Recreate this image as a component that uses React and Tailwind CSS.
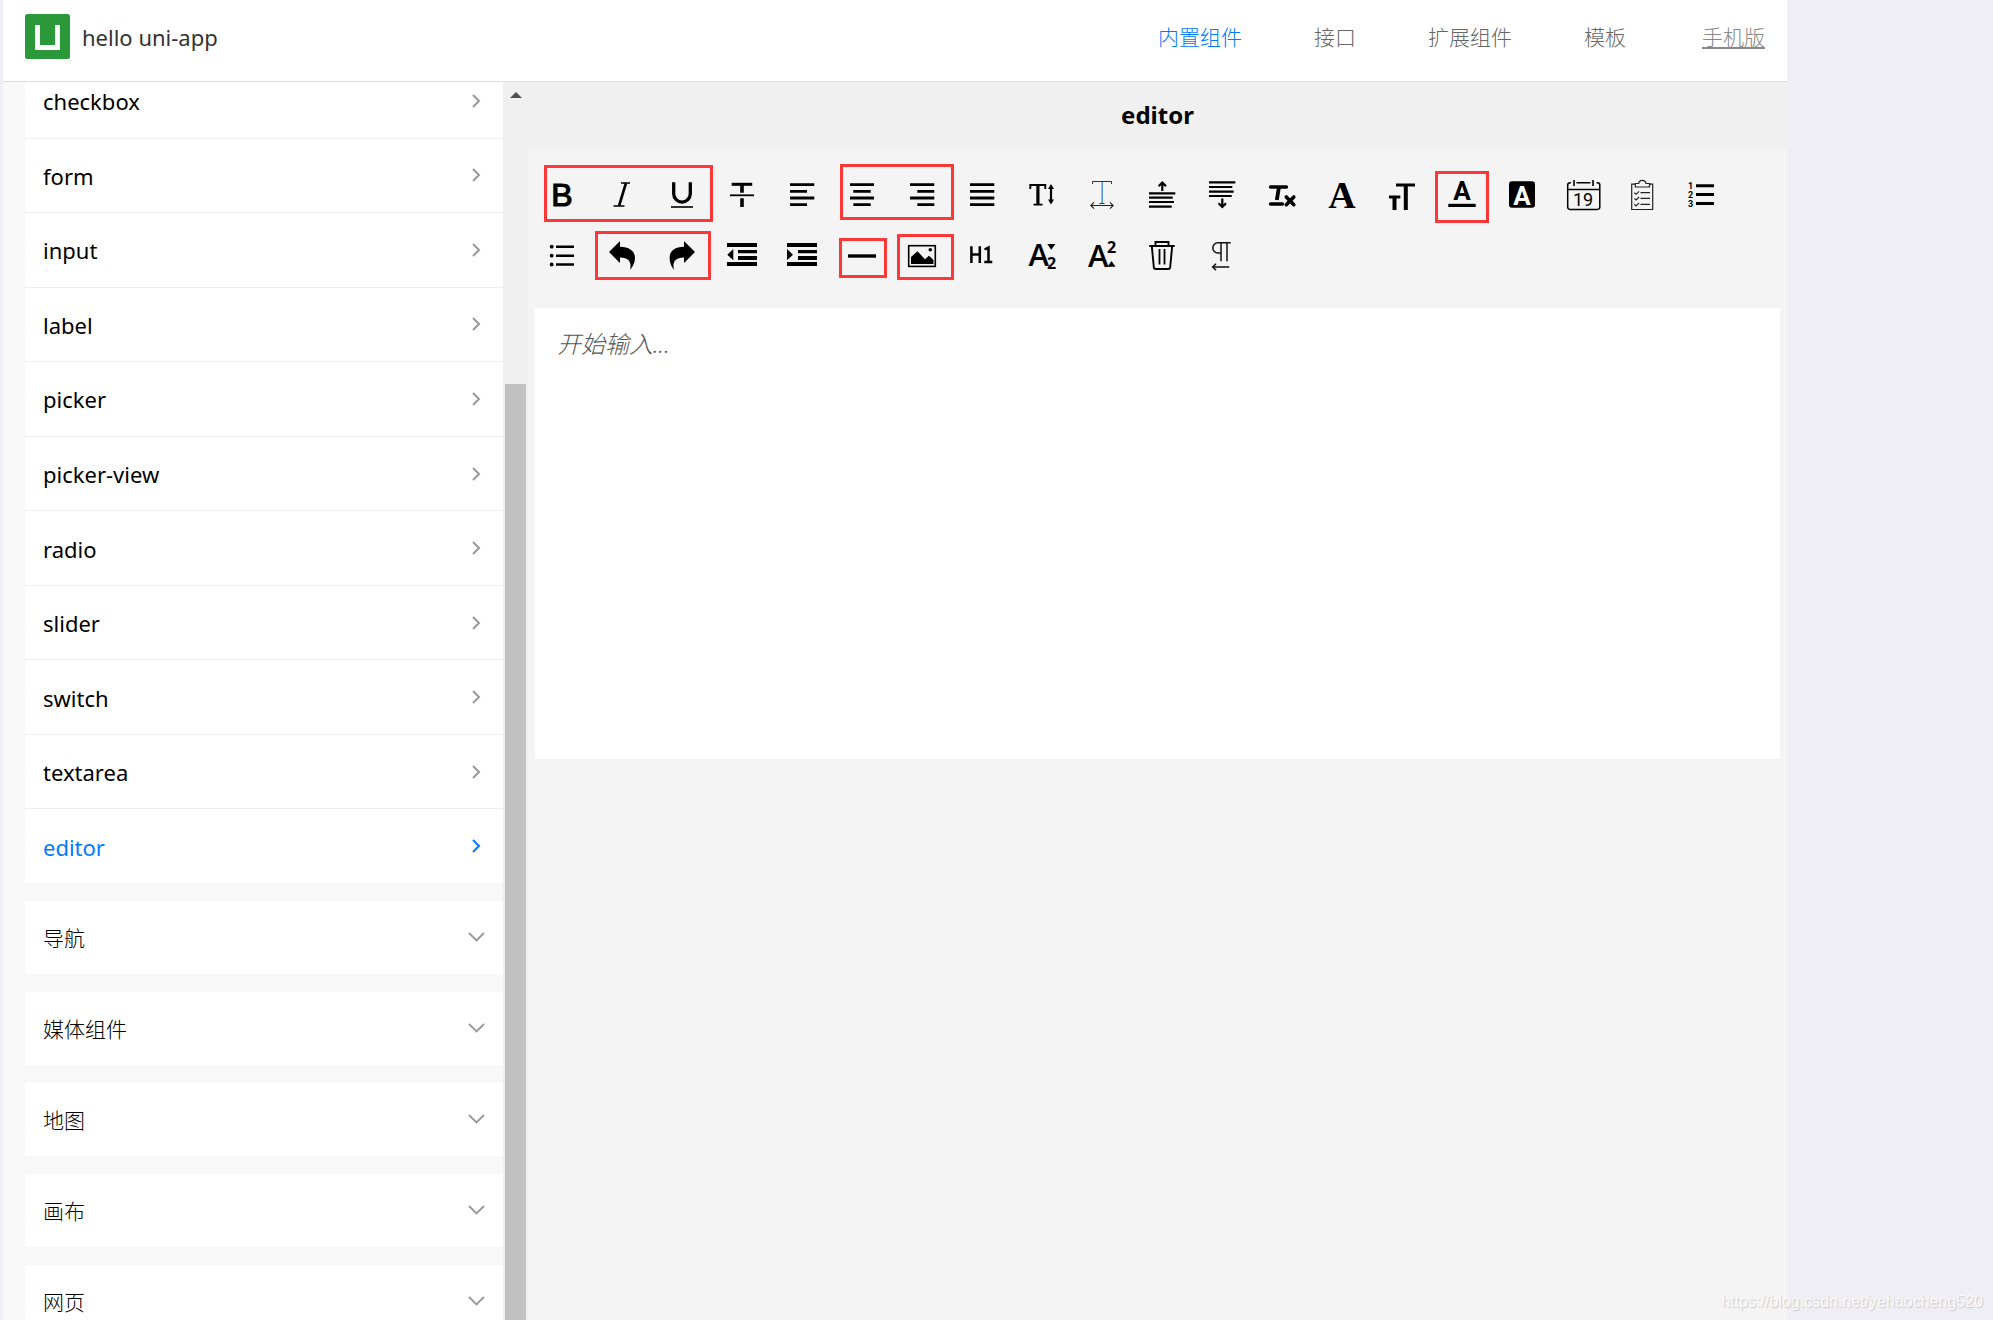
import React from 'react';

const components = [
  'checkbox',
  'form',
  'input',
  'label',
  'picker',
  'picker-view',
  'radio',
  'slider',
  'switch',
  'textarea',
  'editor',
];

const groups = ['导航', '媒体组件', '地图', '画布', '网页'];

const tabs = ['内置组件', '接口', '扩展组件', '模板'];

// every toolbar icon is drawn on a 40x40 grid
const tools = [
  {
    name: 'bold',
    icon: (
      <text x="20" y="30" textAnchor="middle" fontSize="32" fill="#000" strokeWidth="1.2" fontFamily="'Liberation Sans', sans-serif">B</text>
    ),
  },
  {
    name: 'italic',
    icon: (
      <>
        <path d="M19 7h9M11.5 30h11" strokeWidth="1.6" />
        <path d="M24 7l-7 23" strokeWidth="2.6" />
      </>
    ),
  },
  {
    name: 'underline',
    icon: (
      <>
        <path d="M11.7 6.3v11.5a8.3 8.3 0 0 0 16.6 0V6.3" strokeWidth="3.3" />
        <path d="M9 31h22" strokeWidth="1.6" />
      </>
    ),
  },
  {
    name: 'strike',
    icon: (
      <>
        <path d="M9.7 8.3h20.5" strokeWidth="3" />
        <path d="M20 8.3v8.4M20 22.3V31" strokeWidth="3.6" />
        <path d="M8 19.3h24" strokeWidth="1.8" />
      </>
    ),
  },
  { name: 'align-left', icon: <path d="M8 8.7h24.3M8 15.3h17M8 22h24.3M8 28.7h17" strokeWidth="2.8" /> },
  { name: 'align-center', icon: <path d="M8 8.7h24M11.3 15.3h17.4M8 22h24M11.3 28.7h17.4" strokeWidth="2.8" /> },
  { name: 'align-right', icon: <path d="M8 8.7h24.3M15.3 15.3h17M8 22h24.3M15.3 28.7h17" strokeWidth="2.8" /> },
  { name: 'align-justify', icon: <path d="M8 8.7h24.3M8 15.3h24.3M8 22h24.3M8 28.7h24.3" strokeWidth="2.8" /> },
  {
    name: 'line-height',
    icon: (
      <>
        <path d="M8.3 13V9h15v4M11.5 28.6h9" strokeWidth="1.9" />
        <path d="M15.9 9v19.5" strokeWidth="3.2" />
        <path d="M29 11v15" strokeWidth="2.2" />
        <path d="M29 8l3 5h-6zM29 28.5l3-5h-6z" fill="#000" stroke="none" />
      </>
    ),
  },
  {
    name: 'letter-spacing',
    icon: (
      <>
        <path d="M10.5 8V5.5h19V8M17.5 27.5h5" strokeWidth="1" stroke="#333" />
        <path d="M19.5 6v21" strokeWidth="1" stroke="#d9ab78" />
        <path d="M20.5 6v21" strokeWidth="1" stroke="#579bd0" />
        <path d="M9 29.5h22M12 26.3l-3.2 3.2 3.2 3.2M28 26.3l3.2 3.2-3.2 3.2" strokeWidth="1.1" stroke="#222" />
      </>
    ),
  },
  {
    name: 'margin-top',
    icon: (
      <>
        <path d="M7 17.3h26.3M7 21.7h23.7M7 26h25M7 30.7h22.7" strokeWidth="2.2" />
        <path d="M20.3 15V6.5M16.6 10.3l3.7-3.8 3.7 3.8" strokeWidth="2.2" />
      </>
    ),
  },
  {
    name: 'margin-bottom',
    icon: (
      <>
        <path d="M7 6.3h26.3M7 11h23.3M7 15.7h24.7M7 20h22.7" strokeWidth="2.2" />
        <path d="M20.3 22.5V31M16.6 27.2l3.7 3.8 3.7-3.8" strokeWidth="2.2" />
      </>
    ),
  },
  {
    name: 'clear-format',
    icon: (
      <>
        <path d="M8.5 11h16M8.5 28h12" strokeWidth="3.3" strokeLinecap="round" />
        <path d="M17 11l-2.2 13" strokeWidth="3.8" />
        <path d="M24.3 21l7.5 7.7M31.8 21l-7.5 7.7" strokeWidth="3.6" strokeLinecap="round" />
      </>
    ),
  },
  {
    name: 'font-family',
    icon: (
      <text x="20" y="31.5" textAnchor="middle" fontSize="38" fontWeight="700" fill="#000" stroke="none" fontFamily="'Liberation Serif', serif">A</text>
    ),
  },
  {
    name: 'font-size',
    icon: (
      <>
        <path d="M14 9h19M7 21h11.3" strokeWidth="3.2" />
        <path d="M23.8 9v25M12.5 21v13" strokeWidth="4" />
      </>
    ),
  },
  {
    name: 'color',
    icon: (
      <>
        <text x="20" y="24" textAnchor="middle" fontSize="26" fontWeight="700" fill="#000" stroke="none" fontFamily="Roboto, sans-serif">A</text>
        <path d="M6.3 29.4h27.4" strokeWidth="3.2" />
      </>
    ),
  },
  {
    name: 'background-color',
    icon: (
      <>
        <rect x="7" y="5.3" width="26" height="26.4" rx="3" fill="#000" stroke="none" />
        <text x="20" y="28.5" textAnchor="middle" fontSize="26" fontWeight="700" fill="#fff" stroke="none" fontFamily="Roboto, sans-serif">A</text>
      </>
    ),
  },
  {
    name: 'date',
    icon: (
      <>
        <path d="M9 6.8H8a2.3 2.3 0 0 0-2.3 2.3v22a2.3 2.3 0 0 0 2.3 2.3h27.5a2.3 2.3 0 0 0 2.3-2.3v-22a2.3 2.3 0 0 0-2.3-2.3h-1M14.5 6.8h14M5.7 13.4h32" strokeWidth="1.5" />
        <path d="M12 4v6M31 4v6" strokeWidth="1.6" />
        <text x="21" y="29.5" textAnchor="middle" fontSize="18" fill="#000" stroke="none" fontFamily="Roboto, sans-serif">19</text>
      </>
    ),
  },
  {
    name: 'check-list',
    icon: (
      <g stroke="#222" strokeWidth="1.2">
        <path d="M13 8.2H9.7v25.3h21V8.2h-3" />
        <path d="M13.3 11V7.5h3.4c.4-4.2 6.8-4.2 7.2 0h3.6V11z" />
        <path d="M18.5 16.7h9.5M18.5 22.4h9.5M18.5 28.3h9.5" />
        <path d="M12.3 16.7l1.8 1.6 3-3M12.3 22.4l1.8 1.6 3-3M12.3 28.3l1.8 1.6 3-3" />
      </g>
    ),
  },
  {
    name: 'ordered-list',
    icon: (
      <>
        <path d="M14 9.7h18M14 18.4h18M14 27.4h18" strokeWidth="3" />
        <g fontSize="9" fontWeight="700" fill="#000" stroke="none" fontFamily="Roboto, sans-serif">
          <text x="6" y="12.5">1</text>
          <text x="6" y="21.5">2</text>
          <text x="6" y="31">3</text>
        </g>
      </>
    ),
  },
  {
    name: 'bullet-list',
    icon: (
      <>
        <path d="M14 10.7h18M14 19.7h18M14 28.5h18" strokeWidth="2.6" />
        <g fill="#000" stroke="none">
          <circle cx="9.7" cy="10.7" r="1.9" />
          <circle cx="9.7" cy="19.7" r="1.9" />
          <circle cx="9.7" cy="28.5" r="1.9" />
        </g>
      </>
    ),
  },
  {
    name: 'undo',
    icon: <path d="M7 16L18 5v5.8c10 .2 15 4.7 15 11.2 0 5-2.5 9-5 12 1.5-6 .5-12.5-10-12.5V27z" fill="#000" stroke="none" />,
  },
  {
    name: 'redo',
    icon: <path d="M33 16L22 5v5.8C12 11 7.6 15.5 7.6 22c0 5 2 9 4.4 12-1.5-6-.5-12.5 10-12.5V27z" fill="#000" stroke="none" />,
  },
  {
    name: 'outdent',
    icon: <path d="M5 7h30v4H5zM16 14h19v3.3H16zM16 20h19v4H16zM5 26h30v4H5zM5.3 18.7l6-5.7v11.3z" fill="#000" stroke="none" />,
  },
  {
    name: 'indent',
    icon: <path d="M5 7h30v4H5zM16 14h19v3.3H16zM16 20h19v4H16zM5 26h30v4H5zM11 18.7L5 13v11.3z" fill="#000" stroke="none" />,
  },
  { name: 'divider', icon: <path d="M6 20h28" strokeWidth="3.4" /> },
  {
    name: 'image',
    icon: (
      <>
        <rect x="6.7" y="9.7" width="26.6" height="20.7" strokeWidth="1.6" />
        <path d="M9 28v-7l6.5-5.7 7.5 8 4-3.5 4.5 4.2v4z" fill="#000" stroke="none" />
        <circle cx="28.3" cy="13.8" r="1.8" fill="#000" stroke="none" />
      </>
    ),
  },
  {
    name: 'header',
    icon: <path d="M9.4 10.3V27M17.8 10.3V27M9.4 18.4h8.4M22.3 26h8M26.5 27V11.5l-4 2" strokeWidth="2.5" />,
  },
  {
    name: 'subscript',
    icon: (
      <>
        <g fill="#000" stroke="none" fontFamily="'Open Sans', sans-serif">
          <text x="6.5" y="30" fontSize="31" fontWeight="600">A</text>
          <text x="25" y="33" fontSize="16" fontWeight="700">2</text>
        </g>
        <path d="M25.3 8h8l-4 5.7z" fill="#000" stroke="none" />
      </>
    ),
  },
  {
    name: 'superscript',
    icon: (
      <>
        <g fill="#000" stroke="none" fontFamily="'Open Sans', sans-serif">
          <text x="6" y="30.5" fontSize="31" fontWeight="600">A</text>
          <text x="25" y="17" fontSize="16" fontWeight="700">2</text>
        </g>
        <path d="M25.5 30.7h8l-4-5.7z" fill="#000" stroke="none" />
      </>
    ),
  },
  {
    name: 'trash',
    icon: (
      <>
        <path d="M7.3 10h25.4M13.5 10V6h13v4" strokeWidth="1.9" />
        <path d="M9.8 10l2 21a2 2 0 0 0 2 2h12.4a2 2 0 0 0 2-2l2-21" strokeWidth="1.9" />
        <path d="M17.5 13v15.5M22.5 13v15.5" strokeWidth="1.8" />
      </>
    ),
  },
  {
    name: 'direction',
    icon: (
      <g stroke="#111" strokeWidth="1.5">
        <path d="M28.7 6.7H16a5.2 5.2 0 0 0 0 10.4h3M19 6.7v18.6M25 6.7v18.6" />
        <path d="M27.3 31H10.5M14 27.8L10.7 31l3.3 3.2" />
      </g>
    ),
  },
];

// red frames laid over the highlighted tools
const frames = [
  'left-[16px] top-[17px] w-[169px] h-[57px]',
  'left-[312px] top-[16px] w-[114px] h-[56px]',
  'left-[907px] top-[23px] w-[54px] h-[52px]',
  'left-[67px] top-[83px] w-[116px] h-[49px]',
  'left-[311px] top-[90px] w-[48px] h-[40px]',
  'left-[369px] top-[86px] w-[57px] h-[46px]',
];

function Header() {
  return (
    <header className="flex shrink-0 items-center justify-between h-[82px] px-[22px] pb-2 bg-white border-b border-[#dcdcdc]">
      <div className="flex items-center gap-3">
        <svg className="w-[45px] h-[45px]" viewBox="0 0 45 45">
          <rect width="45" height="45" rx="2.5" fill="#2b9939" />
          <path d="M12.5 11v22.5h20V11" fill="none" stroke="#fff" strokeWidth="4.8" />
        </svg>
        <span className="text-[22px] leading-8 text-[#333]">hello uni-app</span>
      </div>
      <nav className="flex items-center gap-[72px] text-[21px] leading-8 font-light text-[#666]">
        {tabs.map((tab, i) => (
          <a key={tab} href="#" className={i === 0 ? 'text-[#007aff]' : ''}>{tab}</a>
        ))}
        <a href="#" className="ml-1 text-[#888] underline underline-offset-2">手机版</a>
      </nav>
    </header>
  );
}

function Sidebar() {
  return (
    <aside className="flex shrink-0 w-[525px] pl-[22px] bg-[#f8f8f8] overflow-hidden">
      <div className="flex-1 -mt-[18px]">
        <ul className="flex flex-col h-[819px] bg-white">
          {components.map((name) => (
            <li key={name} className="flex flex-1 border-b border-[#efefef] last:border-b-0">
              <a
                href="#"
                className={
                  name === 'editor'
                    ? 'flex flex-1 items-center justify-between pl-[18px] pr-[22px] text-[22px] text-[#007aff]'
                    : 'flex flex-1 items-center justify-between pl-[18px] pr-[22px] text-[22px] text-black'
                }
              >
                <span className="pt-0.5">{name}</span>
                <svg className="w-[9px] h-[14px]" viewBox="0 0 9 14" fill="none" stroke={name === 'editor' ? '#007aff' : '#999'} strokeWidth="2">
                  <path d="M1 1l6 6-6 6" />
                </svg>
              </a>
            </li>
          ))}
        </ul>
        {groups.map((name) => (
          <button key={name} className="flex items-center justify-between w-full h-[73px] mt-[18px] px-[18px] pb-0.5 bg-white text-[21px] font-light text-black">
            <span className="pt-1">{name}</span>
            <svg className="w-[17px] h-[10px]" viewBox="0 0 17 10" fill="none" stroke="#999" strokeWidth="1.9">
              <path d="M1 1l7.5 7.5L16 1" />
            </svg>
          </button>
        ))}
      </div>
      <div className="flex flex-col items-center w-[25px] pt-[10px] bg-[#f0f0f0]">
        <svg className="shrink-0 w-3 h-[6px]" viewBox="0 0 12 6">
          <path d="M6 0l6 6H0z" fill="#505050" />
        </svg>
        <div className="flex-1 w-[21px] mt-[286px] bg-[#c1c1c1]" />
      </div>
    </aside>
  );
}

function Editor() {
  return (
    <main className="flex-1 bg-[#f4f4f4]">
      <h1 className="h-[66px] bg-[#f0f0f0] text-center text-[24px] leading-[66px] font-bold text-black">editor</h1>
      <div className="relative flex flex-wrap px-1 pt-[18px] pb-[22px]">
        {tools.map((tool) => (
          <button key={tool.name} aria-label={tool.name} className="flex items-center justify-center w-[60px] h-[60px]">
            <svg className="w-10 h-10 overflow-visible" viewBox="0 0 40 40" fill="none" stroke="#000">{tool.icon}</svg>
          </button>
        ))}
        {frames.map((frame) => (
          <div key={frame} className={`absolute border-3 border-[#fc3838] pointer-events-none ${frame}`} />
        ))}
      </div>
      <div className="px-[7px]">
        <textarea
          aria-label="editor content"
          placeholder="开始输入..."
          className="block w-full h-[451px] px-[22px] py-[18px] bg-white text-[24px] leading-9 font-light resize-none outline-none placeholder:italic placeholder:text-[#555]"
        />
      </div>
    </main>
  );
}

export default function App() {
  return (
    <div className="relative h-screen overflow-hidden pl-[3px] pr-[206px] bg-[#efeef4] font-['Noto_Sans','Noto_Sans_CJK_SC',sans-serif]">
      <div className="flex flex-col h-full">
        <Header />
        <div className="flex flex-1 min-h-0">
          <Sidebar />
          <Editor />
        </div>
      </div>
      <p className="absolute right-[10px] bottom-2 font-['Liberation_Sans',sans-serif] text-[16px] leading-5 text-[#fafafa] [text-shadow:1px_1px_1px_#c8c8c8]">
        https://blog.csdn.net/yehaocheng520
      </p>
    </div>
  );
}
